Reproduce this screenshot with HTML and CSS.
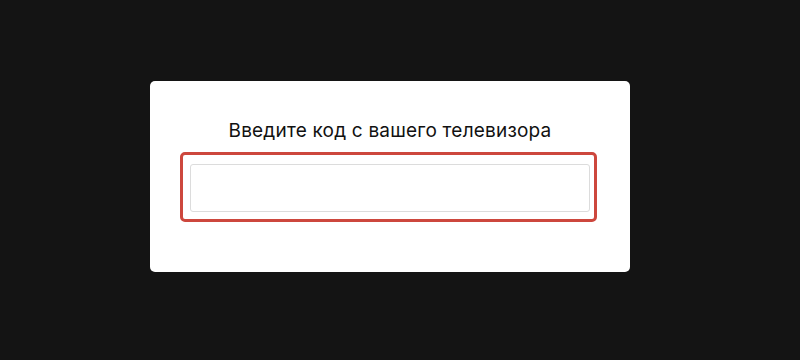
FILE: index.html
```html
<!DOCTYPE html>
<html lang="ru">
<head>
<meta charset="utf-8">
<title>Введите код</title>
<link rel="stylesheet" href="styles.css">
</head>
<body>
<div class="page">
  <div class="card">
    <div class="title">Введите код с вашего телевизора</div>
    <div class="field-wrap">
      <input class="code-input" type="text" aria-label="Код">
    </div>
  </div>
</div>
</body>
</html>
```
FILE: styles.css
```css
html, body {
  margin: 0;
  padding: 0;
  background: #141414;
}
.page {
  width: 800px;
  height: 360px;
  box-sizing: border-box;
  padding: 81px 0 0 150px;
}
.card {
  width: 480px;
  height: 191px;
  box-sizing: border-box;
  background: #ffffff;
  border-radius: 5px;
  padding-top: 38px;
}
.title {
  font-family: Inter, "Liberation Sans", sans-serif;
  font-size: 19px;
  letter-spacing: 0.2px;
  line-height: 24px;
  color: #111111;
  text-align: center;
  margin-bottom: 9px;
}
.field-wrap {
  margin-left: 30px;
  width: 417px;
  height: 70px;
  box-sizing: border-box;
  border: 3px solid #cd473d;
  border-radius: 5px;
  padding: 9px 4px 7px 7px;
}
.code-input {
  display: block;
  width: 400px;
  height: 48px;
  box-sizing: border-box;
  margin: 0;
  border: 1px solid #dcdcdc;
  border-radius: 3px;
  background: #ffffff;
  outline: none;
  font-family: Inter, "Liberation Sans", sans-serif;
  font-size: 18px;
  padding: 0 12px;
}
```
